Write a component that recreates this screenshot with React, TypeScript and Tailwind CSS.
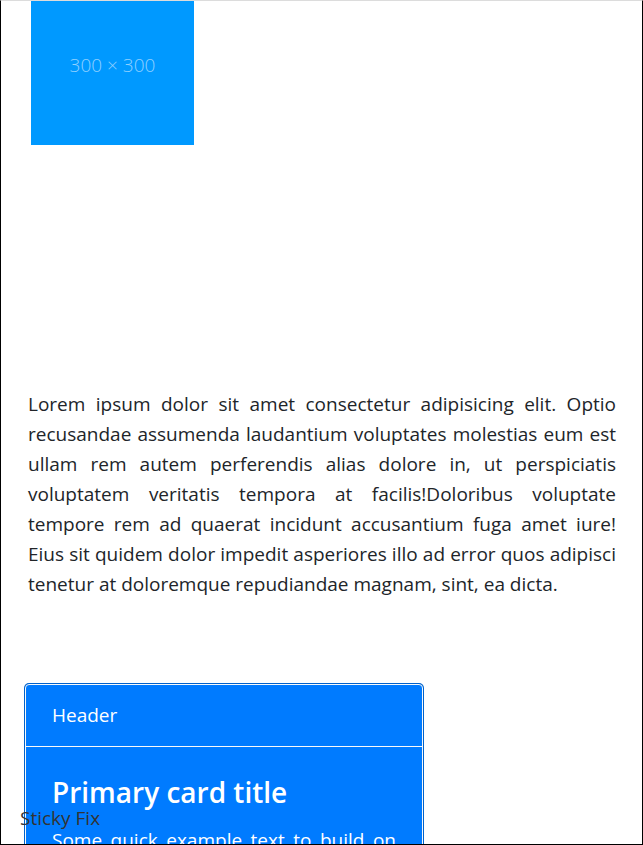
import React from 'react';

const font = { fontFamily: '"Open Sans", "Noto Sans", sans-serif' };

const App = () => {
    return (
        <div
            className="relative h-[845px] w-[643px] overflow-hidden border-t border-l border-r border-b border-t-[#dcdcdc] border-l-black border-r-black border-b-black bg-white text-justify text-[#212529]"
            style={font}
        >
            {/* placeholder picture */}
            <div className="ml-[30px] flex h-[144px] w-[163px] items-center justify-center bg-[#0099ff] pb-[16px]">
                <span className="text-[19px] font-light text-[#8fd0ff]">
                    300 × 300
                </span>
            </div>

            <p className="mt-[244px] ml-[27px] w-[588px] text-[19px] leading-[30px]">
                Lorem ipsum dolor sit amet consectetur adipisicing elit. Optio
                recusandae assumenda laudantium voluptates molestias eum est
                ullam rem autem perferendis alias dolore in, ut perspiciatis
                voluptatem veritatis tempora at facilis!Doloribus voluptate
                tempore rem ad quaerat incidunt accusantium fuga amet iure! Eius
                sit quidem dolor impedit asperiores illo ad error quos adipisci
                tenetur at doloremque repudiandae magnam, sint, ea dicta.
            </p>

            <div className="mt-[85px] ml-[24px] w-[398px] rounded-[4px] border border-[#f8f9fa] bg-[#007bff] text-white ring-1 ring-[#0062cc]">
                <div className="border-b border-[#f8f9fa] px-[26px] py-[17px] text-[19px] leading-[27px]">
                    Header
                </div>
                <div className="px-[26px] pt-[27px]">
                    <h5 className="text-[28px] font-semibold leading-[36px]">
                        Primary card title
                    </h5>
                    <p className="mt-[17px] text-[19px] leading-[27px]">
                        Some quick example text to build on the card title and
                        make up the bulk of the card's content.
                    </p>
                </div>
            </div>

            <div className="absolute bottom-[12px] left-[19px] text-[19px] leading-[27px] text-[#333]">
                Sticky Fix
            </div>
        </div>
    );
};

export default App;
